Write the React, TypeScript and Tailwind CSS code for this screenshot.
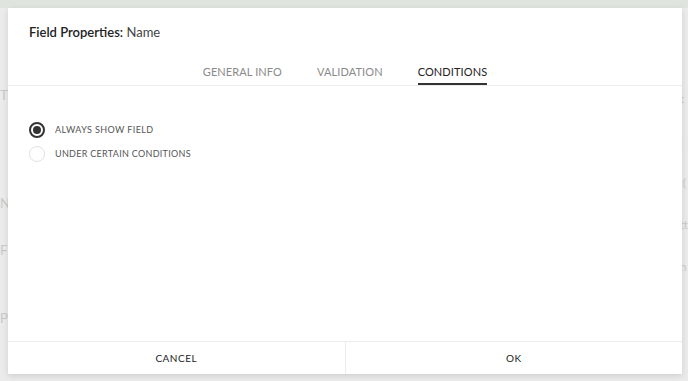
import { useState } from 'react';

const tabs = ['GENERAL INFO', 'VALIDATION', 'CONDITIONS'];

export default function App() {
  const [tab, setTab] = useState('CONDITIONS');
  const [mode, setMode] = useState('always');

  return (
    <div
      className="relative w-[688px] h-[381px] overflow-hidden bg-[#ebebeb]"
      style={{ fontFamily: 'Lato, "Open Sans", sans-serif' }}
    >
      {/* page behind the modal */}
      <div className="h-2 bg-[#dfe5de]" />
      <div className="flex h-[373px] flex-col gap-[28px] pl-0 pt-[78px] text-[13px] text-[#c9c9c9]">
        <span>T</span>
        <span className="mt-[60px]">N</span>
        <span>F</span>
        <span className="mt-[20px]">P</span>
      </div>
      <div className="absolute right-0 top-[90px] flex flex-col gap-[24px] text-[12px] text-[#c9c9c9]">
        <span>t</span>
        <span>:</span>
        <span>:(</span>
        <span>tt</span>
        <span>n</span>
      </div>

      {/* modal */}
      <div className="absolute left-2 top-2 flex h-[366px] w-[674px] flex-col bg-white shadow-[0_2px_6px_rgba(0,0,0,0.12)]">
        <div className="border-b border-[#ececec]">
          <div className="px-[21px] pt-[15px] text-[13px] text-[#222]">
            <span className="font-semibold">Field Properties:</span>{' '}
            <span className="text-[#444]">Name</span>
          </div>
          <div className="mt-[21px] flex justify-center gap-[35px]">
            {tabs.map((t) => (
              <button
                key={t}
                onClick={() => setTab(t)}
                className={
                  'border-b-2 pb-[3px] text-[11px] tracking-[0.1px] ' +
                  (tab === t ? 'border-[#333] text-[#222]' : 'border-transparent text-[#8a8a8a]')
                }
              >
                {t}
              </button>
            ))}
          </div>
        </div>

        <div className="flex flex-1 flex-col gap-[8px] px-[21px] pt-[36px]">
          <label className="flex items-center gap-[10px]" onClick={() => setMode('always')}>
            <span className="flex h-4 w-4 items-center justify-center rounded-full border-2 border-[#333]">
              {mode === 'always' && <span className="h-[8px] w-[8px] rounded-full bg-[#333]" />}
            </span>
            <span className="text-[9px] tracking-[0.4px] text-[#555]">ALWAYS SHOW FIELD</span>
          </label>
          <label className="flex items-center gap-[10px]" onClick={() => setMode('conditions')}>
            <span className="flex h-4 w-4 items-center justify-center rounded-full border border-[#e2e2e2]">
              {mode === 'conditions' && <span className="h-[8px] w-[8px] rounded-full bg-[#333]" />}
            </span>
            <span className="text-[9px] tracking-[0.3px] text-[#555]">UNDER CERTAIN CONDITIONS</span>
          </label>
        </div>

        <div className="flex h-[33px] border-t border-[#ececec]">
          <button className="flex-1 border-r border-[#ececec] text-[10px] tracking-[0.5px] text-[#222]">CANCEL</button>
          <button className="flex-1 text-[10px] tracking-[0.5px] text-[#222]">OK</button>
        </div>
      </div>
    </div>
  );
}
